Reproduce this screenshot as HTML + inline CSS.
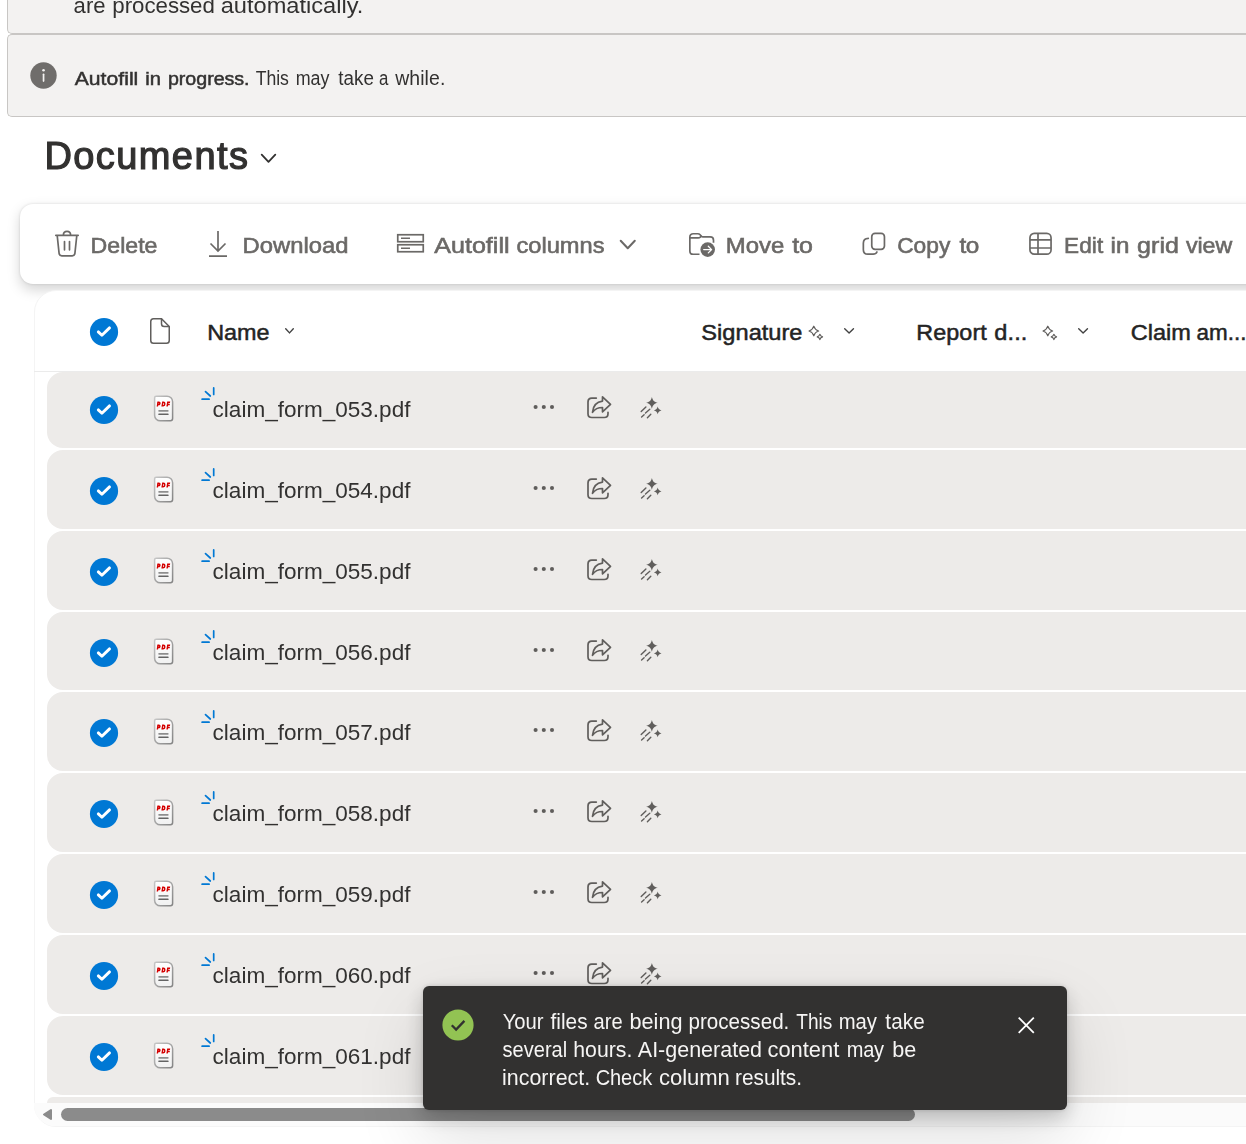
<!DOCTYPE html>
<html lang="en">
<head>
<meta charset="utf-8">
<title>Documents</title>
<style>
*{box-sizing:border-box;margin:0;padding:0}
html,body{width:1246px;height:1144px;overflow:hidden;background:#fff}
body{font-family:"Liberation Sans",sans-serif;color:#323130;position:relative}
.t{position:absolute;white-space:nowrap;line-height:1;transform-origin:0 0}
.g{position:absolute;will-change:transform}
.x{white-space:nowrap;line-height:1}
.t span,.x span{display:inline-block;transform-origin:0 0;white-space:nowrap;line-height:1;vertical-align:top}
.banner{position:absolute;left:7px;background:#f3f2f1;border:1px solid #c8c6c4;border-right:none;border-radius:5px 0 0 5px;width:1250px}
.toolbar{position:absolute;left:20px;top:204px;width:1300px;height:80px;background:#fff;border-radius:13px;box-shadow:0 0 2.8px rgba(0,0,0,.12),0 5.6px 13px rgba(0,0,0,.17)}
.card{position:absolute;left:34px;top:290px;width:1300px;height:837px;border:1px solid #f4f4f4;border-radius:22px 0 0 22px;background:#fff;overflow:hidden}
.row{position:absolute;left:47px;width:1300px;height:78.7px;background:#edebe9;border-radius:16px 0 0 16px}
svg{position:absolute;overflow:visible}
.toast{position:absolute;left:423px;top:986.4px;width:644px;height:123.6px;background:#323130;border-radius:6px;box-shadow:0 7px 20px rgba(0,0,0,.2),0 0 4px rgba(0,0,0,.14),0 30px 70px rgba(0,0,0,.12)}
</style>
</head>
<body>
<svg width="0" height="0" style="left:0;top:0"><defs><linearGradient id="ps" x1="0" y1="0" x2="1" y2="1"><stop offset="0" stop-color="#c6c6c6"/><stop offset="1" stop-color="#848484"/></linearGradient><linearGradient id="pf" x1="0" y1="0" x2="0" y2="1"><stop offset="0" stop-color="#ffffff"/><stop offset="1" stop-color="#f1f1f1"/></linearGradient></defs></svg>
<div class="banner" style="top:-40px;height:74px"></div>
<div class="g" style="left:73px;top:-5px"><div class="x" style="font-size:22.4px;"><span style="transform:translateX(0.53px) scaleX(0.986);letter-spacing:0.096px">are</span> <span style="transform:translateX(0.35px) scaleX(0.995);letter-spacing:-0.036px">processed</span> <span style="transform:translateX(-0.31px) scaleX(1.055)">automatically.</span></div></div>
<div class="banner" style="top:34px;height:83px"></div>
<svg style="left:30px;top:62px" width="27" height="27" viewBox="0 0 27 27"><circle cx="13.500" cy="13.500" r="13.200" fill="#6f6d6b"/><rect x="12.700" y="11.400" width="1.700" height="8.500" rx=".8" fill="#f3f2f1"/><circle cx="13.550" cy="8.200" r="1.300" fill="#f3f2f1"/></svg>
<div class="g" style="left:74px;top:70px"><div class="x" style="font-size:18.8px;-webkit-text-stroke:0.5px currentColor;"><span style="transform:translateX(0.69px) scaleX(1.125);letter-spacing:0.024px">Autofill</span> <span style="transform:translateX(9.34px) scaleX(1.076)">in</span> <span style="transform:translateX(11.98px) scaleX(1.046);letter-spacing:-0.04px">progress.</span> <span style="transform:translate(16.67px,-1px) scaleX(0.899);letter-spacing:-0.051px;font-size:19.6px;-webkit-text-stroke:0px currentColor">This</span> <span style="transform:translate(14.65px,-1px) scaleX(0.912);letter-spacing:-0.038px;font-size:19.6px;-webkit-text-stroke:0px currentColor">may</span> <span style="transform:translate(15.3px,-1px) scaleX(0.96);font-size:19.6px;-webkit-text-stroke:0px currentColor">take</span> <span style="transform:translate(14.0px,-1px) scaleX(0.86);font-size:19.6px;-webkit-text-stroke:0px currentColor">a</span> <span style="transform:translate(14.22px,-1px) scaleX(0.992);letter-spacing:0.073px;font-size:19.6px;-webkit-text-stroke:0px currentColor">while.</span></div></div>
<div class="g" style="left:44px;top:137px"><div class="x" style="font-size:38px;-webkit-text-stroke:1.2px currentColor;"><span style="transform:translateX(0.38px);letter-spacing:1.426px">Documents</span></div></div>
<svg style="left:261px;top:154.1px" width="15" height="8.5" viewBox="0 0 15 8.5"><path d="M0.700 0.700L7.5 7.8L14.3 0.700" fill="none" stroke="#323130" stroke-width="1.8" stroke-linecap="round" stroke-linejoin="round"/></svg>
<div class="toolbar"></div>
<div class="g" style="left:90px;top:235px"><div class="x" style="font-size:22.4px;-webkit-text-stroke:0.6px currentColor;color:#6b6967;"><span style="transform:translateX(0.54px) scaleX(1.034)">Delete</span></div></div>
<div class="g" style="left:242px;top:235px"><div class="x" style="font-size:22.4px;-webkit-text-stroke:0.6px currentColor;color:#6b6967;"><span style="transform:translateX(0.61px) scaleX(1.063)">Download</span></div></div>
<div class="g" style="left:434px;top:235px"><div class="x" style="font-size:22.4px;-webkit-text-stroke:0.6px currentColor;color:#6b6967;"><span style="transform:translateX(0.27px) scaleX(1.12)">Autofill</span> <span style="transform:translateX(9.41px) scaleX(1.057)">columns</span></div></div>
<div class="g" style="left:725px;top:235px"><div class="x" style="font-size:22.4px;-webkit-text-stroke:0.6px currentColor;color:#6b6967;"><span style="transform:translateX(0.85px) scaleX(1.069);letter-spacing:-0.058px">Move</span> <span style="transform:translateX(6.2px) scaleX(1.114);letter-spacing:-0.032px">to</span></div></div>
<div class="g" style="left:897px;top:235px"><div class="x" style="font-size:22.4px;-webkit-text-stroke:0.6px currentColor;color:#6b6967;"><span style="transform:translateX(0.16px) scaleX(1.016);letter-spacing:0.035px">Copy</span> <span style="transform:translateX(3.41px) scaleX(1.086);letter-spacing:-0.31px">to</span></div></div>
<div class="g" style="left:1064px;top:235px"><div class="x" style="font-size:22.4px;-webkit-text-stroke:0.6px currentColor;color:#6b6967;"><span style="transform:translateX(0.09px) scaleX(1.007);letter-spacing:0.071px">Edit</span> <span style="transform:translateX(1.56px) scaleX(1.079);letter-spacing:-0.041px">in</span> <span style="transform:translateX(3.93px) scaleX(1.118);letter-spacing:0.094px">grid</span> <span style="transform:translateX(9.07px) scaleX(1.035);letter-spacing:-0.094px">view</span></div></div>
<svg style="left:55px;top:229.700px" width="24" height="27" viewBox="0 0 24 27"><path d="M.8 5.3h22.4M8.4 5c0-2.3 1.5-3.7 3.6-3.7s3.6 1.4 3.6 3.7M2.2 5.5l1.9 17.8c.2 1.5 1.2 2.5 2.7 2.5h10.400c1.5 0 2.5-1 2.7-2.5L21.8 5.5M9.5 11.6v8.2M14.5 11.6v8.2" fill="none" stroke="#6b6967" stroke-width="1.700" stroke-linecap="round"/></svg>
<svg style="left:209px;top:231px" width="18" height="26" viewBox="0 0 18 26"><path d="M9 0v20M1.500 12.500L9 20l7.500-7.500M0 25.200h18" fill="none" stroke="#6b6967" stroke-width="1.700"/></svg>
<svg style="left:397px;top:234px" width="27" height="19" viewBox="0 0 27 19"><rect x=".75" y=".75" width="25.500" height="7" fill="none" stroke="#6b6967" stroke-width="1.700"/><rect x=".75" y="10.750" width="25.500" height="7" fill="none" stroke="#6b6967" stroke-width="1.700"/><path d="M4 4.250h9M4 14.250h9" stroke="#6b6967" stroke-width="1.700"/></svg>
<svg style="left:620px;top:239.5px" width="15.5" height="9" viewBox="0 0 15.5 9"><path d="M0.700 0.700L7.75 8.3L14.8 0.700" fill="none" stroke="#6b6967" stroke-width="2" stroke-linecap="round" stroke-linejoin="round"/></svg>
<svg style="left:689px;top:232px" width="27" height="26" viewBox="0 0 27 26"><path d="M10.500 22.250H4.200C2.200 22.250.85 20.900.85 18.900V5.100C.85 3.100 2.200 1.750 4.200 1.750h4.600c1 0 1.700.3 2.300 1l1.300 1.500c.4.500.9.700 1.500.7h7.300c2 0 3.300 1.300 3.300 3.300v2.400" fill="none" stroke="#6b6967" stroke-width="1.700"/><path d="M.85 5.950h8.300c.9 0 1.600-.3 2.200-.9l1.300-1.300" fill="none" stroke="#6b6967" stroke-width="1.700"/><circle cx="18.700" cy="17.600" r="7.300" fill="#6b6967"/><path d="M14.700 17.600h7.600M19.300 14.300l3.300 3.300-3.300 3.300" fill="none" stroke="#fff" stroke-width="1.300" stroke-linecap="round" stroke-linejoin="round"/></svg>
<svg style="left:862px;top:232px" width="24" height="24" viewBox="0 0 24 24"><rect x="9.750" y="1.450" width="12.700" height="15.950" rx="3.300" fill="none" stroke="#6b6967" stroke-width="1.700"/><path d="M6.300 6.300C3.400 6.400 1.350 8.300 1.350 11.200v6.500c0 2.700 1.800 4.500 4.500 4.500h5.200c1.900 0 3.300-.8 3.900-2.200" fill="none" stroke="#6b6967" stroke-width="1.700" stroke-linecap="round"/></svg>
<svg style="left:1029px;top:232px" width="23" height="24" viewBox="0 0 23 24"><rect x=".95" y="1.450" width="21.100" height="20.750" rx="4.300" fill="none" stroke="#6b6967" stroke-width="1.700"/><path d="M.95 7.850h21.100M.95 16h21.100M9 1.450v20.750" stroke="#6b6967" stroke-width="1.700" fill="none"/></svg>
<div class="card"></div>
<div style="position:absolute;left:34px;top:370.500px;width:1300px;height:1px;background:#ebebeb"></div>
<svg style="left:90px;top:317.8px" width="28" height="28" viewBox="0 0 28 28"><circle cx="14" cy="14" r="14.100" fill="#0078d4"/><path d="M8.300 13.900L11.900 17.300L19.500 9.900" fill="none" stroke="#fff" stroke-width="2.900" stroke-linecap="round" stroke-linejoin="round"/></svg>
<svg style="left:150px;top:318px" width="20" height="26" viewBox="0 0 20 26"><path d="M3.500.75h8l7.750 7.750V22.500c0 1.500-1.200 2.750-2.750 2.750H3.500C2 25.250.75 24 .75 22.500V3.500C.75 2 2 .75 3.500.75z" fill="none" stroke="#605e5c" stroke-width="1.500"/><path d="M11.500.75v5c0 1.500 1.200 2.750 2.750 2.750h5" fill="none" stroke="#605e5c" stroke-width="1.500"/></svg>
<div class="t" style="left:207px;top:322px;font-size:22.4px;-webkit-text-stroke:0.5px currentColor;color:#242424;"><span style="transform:translateX(0.26px) scaleX(1.044);letter-spacing:-0.024px">Name</span></div>
<svg style="left:285px;top:328.2px" width="9" height="5.6" viewBox="0 0 9 5.6"><path d="M0.700 0.700L4.5 4.8999999999999995L8.3 0.700" fill="none" stroke="#424242" stroke-width="1.4" stroke-linecap="round" stroke-linejoin="round"/></svg>
<div class="t" style="left:701px;top:322px;font-size:22.4px;-webkit-text-stroke:0.5px currentColor;color:#242424;"><span style="transform:translateX(0.36px) scaleX(1.055)">Signature</span></div>
<svg style="left:808px;top:325px" width="16" height="16" viewBox="0 0 16 16"><path d="M5.8 1.2000000000000002c0.86 2.88 1.92 3.94 4.8 4.8c-2.88 0.86 -3.94 1.92 -4.8 4.8c-0.86 -2.88 -1.92 -3.94 -4.8 -4.8c2.88 -0.86 3.94 -1.92 4.8 -4.8z" fill="none" stroke="#605e5c" stroke-width="1.200" stroke-linejoin="round"/><path d="M11.9 9.2c0.49 1.62 1.08 2.21 2.7 2.7c-1.62 0.49 -2.21 1.08 -2.7 2.7c-0.49 -1.62 -1.08 -2.21 -2.7 -2.7c1.62 -0.49 2.21 -1.08 2.7 -2.7z" fill="none" stroke="#605e5c" stroke-width="1.100" stroke-linejoin="round"/></svg>
<svg style="left:843.5px;top:328.1px" width="10.2" height="5.7" viewBox="0 0 10.2 5.7"><path d="M0.700 0.700L5.1 5.0L9.5 0.700" fill="none" stroke="#424242" stroke-width="1.4" stroke-linecap="round" stroke-linejoin="round"/></svg>
<div class="t" style="left:916px;top:322px;font-size:22.4px;-webkit-text-stroke:0.5px currentColor;color:#242424;"><span style="transform:translateX(0.25px) scaleX(1.042);letter-spacing:0.091px">Report</span> <span style="transform:translateX(4.17px) scaleX(1.052);letter-spacing:0.163px">d...</span></div>
<svg style="left:1042.2px;top:325px" width="16" height="16" viewBox="0 0 16 16"><path d="M5.8 1.2000000000000002c0.86 2.88 1.92 3.94 4.8 4.8c-2.88 0.86 -3.94 1.92 -4.8 4.8c-0.86 -2.88 -1.92 -3.94 -4.8 -4.8c2.88 -0.86 3.94 -1.92 4.8 -4.8z" fill="none" stroke="#605e5c" stroke-width="1.200" stroke-linejoin="round"/><path d="M11.9 9.2c0.49 1.62 1.08 2.21 2.7 2.7c-1.62 0.49 -2.21 1.08 -2.7 2.7c-0.49 -1.62 -1.08 -2.21 -2.7 -2.7c1.62 -0.49 2.21 -1.08 2.7 -2.7z" fill="none" stroke="#605e5c" stroke-width="1.100" stroke-linejoin="round"/></svg>
<svg style="left:1077.9px;top:328.3px" width="10.2" height="5.7" viewBox="0 0 10.2 5.7"><path d="M0.700 0.700L5.1 5.0L9.5 0.700" fill="none" stroke="#424242" stroke-width="1.4" stroke-linecap="round" stroke-linejoin="round"/></svg>
<div class="t" style="left:1130px;top:322px;font-size:22.4px;-webkit-text-stroke:0.5px currentColor;color:#242424;"><span style="transform:translateX(0.87px) scaleX(1.051);letter-spacing:-0.034px">Claim</span> <span style="transform:translateX(3.54px) scaleX(1.001)">am...</span></div>
<div class="row" style="top:371.700px;height:76.50px"></div>
<svg style="left:90px;top:395.7px" width="28" height="28" viewBox="0 0 28 28"><circle cx="14" cy="14" r="14.100" fill="#0078d4"/><path d="M8.300 13.900L11.900 17.300L19.500 9.900" fill="none" stroke="#fff" stroke-width="2.900" stroke-linecap="round" stroke-linejoin="round"/></svg>
<svg style="left:153px;top:395.0px;will-change:transform" width="21" height="27" viewBox="0 0 21 27"><path d="M3.200 1.200h10.800c3.100 0 5.600 2.500 5.600 5.600v16.800c0 1.200-1 2.200-2.200 2.200H7.200c-3.100 0-5.600-2.500-5.600-5.600V2.800c0-.9.700-1.600 1.600-1.600z" fill="url(#pf)" stroke="url(#ps)" stroke-width="1.500"/><text transform="translate(4.1 11.45) scale(.8 1)" font-family="Liberation Sans, sans-serif" font-size="6" font-weight="bold" font-style="italic" fill="#d40000" stroke="#d40000" stroke-width=".9" letter-spacing="1.8">PDF</text><rect x="5.300" y="15.100" width="10.300" height="1.600" rx=".6" fill="#8e8e8e"/><rect x="5.300" y="18.400" width="10.300" height="1.600" rx=".6" fill="#646464"/></svg>
<svg style="left:201px;top:386.5px" width="14" height="14" viewBox="0 0 14 14"><path d="M12.7 .9v6.6M4.500 4.600l4.800 4.400M1.100 12.200h7" fill="none" stroke="#0078d4" stroke-width="1.700" stroke-linecap="round"/></svg>
<div class="g" style="left:212px;top:399px"><div class="x" style="font-size:22px;"><span style="transform:translateX(0.58px) scaleX(1.024)">claim_form_053.pdf</span></div></div>
<svg style="left:530px;top:401.9px" width="28" height="10" viewBox="0 0 28 10"><circle cx="5.600" cy="5" r="2.050" fill="#5f5d5b"/><circle cx="13.800" cy="5" r="2.050" fill="#5f5d5b"/><circle cx="22" cy="5" r="2.050" fill="#5f5d5b"/></svg>
<svg style="left:587px;top:395.5px" width="25" height="23" viewBox="0 0 25 23"><path d="M9.300 2.100H4.800C2.600 2.100 1 3.700 1 5.900v11.800c0 2.200 1.600 3.800 3.800 3.800h12.400c2.200 0 3.800-1.600 3.800-3.800v-1.400" fill="none" stroke="#605e5c" stroke-width="1.700" stroke-linecap="round"/><path d="M15.500 .8l8 7.500-8 7.500v-4.300c-4.500 0-7.500 1.300-10 4.800.5-6 3.800-10.400 10-11.200z" fill="none" stroke="#605e5c" stroke-width="1.700" stroke-linejoin="round"/></svg>
<svg style="left:640px;top:396.5px" width="22" height="22" viewBox="0 0 22 22"><path d="M11.9 -0.10000000000000053c0.94 3.66 2.24 4.96 5.9 5.9c-3.66 0.94 -4.96 2.24 -5.9 5.9c-0.94 -3.66 -2.24 -4.96 -5.9 -5.9c3.66 -0.94 4.96 -2.24 5.9 -5.9z" fill="#605e5c"/><path d="M17.7 9.600000000000001c0.61 2.36 1.44 3.19 3.8 3.8c-2.36 0.61 -3.19 1.44 -3.8 3.8c-0.61 -2.36 -1.44 -3.19 -3.8 -3.8c2.36 -0.61 3.19 -1.44 3.8 -3.8z" fill="#605e5c"/><path d="M1.200 14.600L5.900 9.900M1.600 20L4.100 17.700M5.500 16L9.800 12.300M7.400 20.800L10.800 17.200" fill="none" stroke="#605e5c" stroke-width="1.400" stroke-linecap="round"/></svg>
<div class="row" style="top:450.10px;height:79.10px"></div>
<svg style="left:90px;top:476.7px" width="28" height="28" viewBox="0 0 28 28"><circle cx="14" cy="14" r="14.100" fill="#0078d4"/><path d="M8.300 13.900L11.900 17.300L19.500 9.900" fill="none" stroke="#fff" stroke-width="2.900" stroke-linecap="round" stroke-linejoin="round"/></svg>
<svg style="left:153px;top:476.0px;will-change:transform" width="21" height="27" viewBox="0 0 21 27"><path d="M3.200 1.200h10.800c3.100 0 5.600 2.500 5.600 5.600v16.800c0 1.200-1 2.200-2.200 2.200H7.200c-3.100 0-5.600-2.500-5.600-5.600V2.800c0-.9.700-1.600 1.600-1.600z" fill="url(#pf)" stroke="url(#ps)" stroke-width="1.500"/><text transform="translate(4.1 11.45) scale(.8 1)" font-family="Liberation Sans, sans-serif" font-size="6" font-weight="bold" font-style="italic" fill="#d40000" stroke="#d40000" stroke-width=".9" letter-spacing="1.8">PDF</text><rect x="5.300" y="15.100" width="10.300" height="1.600" rx=".6" fill="#8e8e8e"/><rect x="5.300" y="18.400" width="10.300" height="1.600" rx=".6" fill="#646464"/></svg>
<svg style="left:201px;top:467.5px" width="14" height="14" viewBox="0 0 14 14"><path d="M12.7 .9v6.6M4.500 4.600l4.800 4.400M1.100 12.200h7" fill="none" stroke="#0078d4" stroke-width="1.700" stroke-linecap="round"/></svg>
<div class="g" style="left:212px;top:480px"><div class="x" style="font-size:22px;"><span style="transform:translateX(0.58px) scaleX(1.024)">claim_form_054.pdf</span></div></div>
<svg style="left:530px;top:482.9px" width="28" height="10" viewBox="0 0 28 10"><circle cx="5.600" cy="5" r="2.050" fill="#5f5d5b"/><circle cx="13.800" cy="5" r="2.050" fill="#5f5d5b"/><circle cx="22" cy="5" r="2.050" fill="#5f5d5b"/></svg>
<svg style="left:587px;top:476.5px" width="25" height="23" viewBox="0 0 25 23"><path d="M9.300 2.100H4.800C2.600 2.100 1 3.700 1 5.900v11.800c0 2.200 1.600 3.800 3.800 3.800h12.400c2.200 0 3.800-1.600 3.800-3.800v-1.400" fill="none" stroke="#605e5c" stroke-width="1.700" stroke-linecap="round"/><path d="M15.500 .8l8 7.500-8 7.500v-4.300c-4.500 0-7.500 1.300-10 4.800.5-6 3.800-10.400 10-11.200z" fill="none" stroke="#605e5c" stroke-width="1.700" stroke-linejoin="round"/></svg>
<svg style="left:640px;top:477.5px" width="22" height="22" viewBox="0 0 22 22"><path d="M11.9 -0.10000000000000053c0.94 3.66 2.24 4.96 5.9 5.9c-3.66 0.94 -4.96 2.24 -5.9 5.9c-0.94 -3.66 -2.24 -4.96 -5.9 -5.9c3.66 -0.94 4.96 -2.24 5.9 -5.9z" fill="#605e5c"/><path d="M17.7 9.600000000000001c0.61 2.36 1.44 3.19 3.8 3.8c-2.36 0.61 -3.19 1.44 -3.8 3.8c-0.61 -2.36 -1.44 -3.19 -3.8 -3.8c2.36 -0.61 3.19 -1.44 3.8 -3.8z" fill="#605e5c"/><path d="M1.200 14.600L5.900 9.900M1.600 20L4.100 17.700M5.500 16L9.800 12.300M7.400 20.800L10.800 17.200" fill="none" stroke="#605e5c" stroke-width="1.400" stroke-linecap="round"/></svg>
<div class="row" style="top:531.10px;height:79.10px"></div>
<svg style="left:90px;top:557.7px" width="28" height="28" viewBox="0 0 28 28"><circle cx="14" cy="14" r="14.100" fill="#0078d4"/><path d="M8.300 13.900L11.900 17.300L19.500 9.900" fill="none" stroke="#fff" stroke-width="2.900" stroke-linecap="round" stroke-linejoin="round"/></svg>
<svg style="left:153px;top:557.0px;will-change:transform" width="21" height="27" viewBox="0 0 21 27"><path d="M3.200 1.200h10.800c3.100 0 5.600 2.500 5.600 5.600v16.800c0 1.200-1 2.200-2.200 2.200H7.200c-3.100 0-5.600-2.500-5.600-5.600V2.800c0-.9.700-1.600 1.600-1.600z" fill="url(#pf)" stroke="url(#ps)" stroke-width="1.500"/><text transform="translate(4.1 11.45) scale(.8 1)" font-family="Liberation Sans, sans-serif" font-size="6" font-weight="bold" font-style="italic" fill="#d40000" stroke="#d40000" stroke-width=".9" letter-spacing="1.8">PDF</text><rect x="5.300" y="15.100" width="10.300" height="1.600" rx=".6" fill="#8e8e8e"/><rect x="5.300" y="18.400" width="10.300" height="1.600" rx=".6" fill="#646464"/></svg>
<svg style="left:201px;top:548.5px" width="14" height="14" viewBox="0 0 14 14"><path d="M12.7 .9v6.6M4.500 4.600l4.800 4.400M1.100 12.200h7" fill="none" stroke="#0078d4" stroke-width="1.700" stroke-linecap="round"/></svg>
<div class="g" style="left:212px;top:561px"><div class="x" style="font-size:22px;"><span style="transform:translateX(0.58px) scaleX(1.024)">claim_form_055.pdf</span></div></div>
<svg style="left:530px;top:563.9px" width="28" height="10" viewBox="0 0 28 10"><circle cx="5.600" cy="5" r="2.050" fill="#5f5d5b"/><circle cx="13.800" cy="5" r="2.050" fill="#5f5d5b"/><circle cx="22" cy="5" r="2.050" fill="#5f5d5b"/></svg>
<svg style="left:587px;top:557.5px" width="25" height="23" viewBox="0 0 25 23"><path d="M9.300 2.100H4.800C2.600 2.100 1 3.700 1 5.900v11.800c0 2.200 1.600 3.800 3.800 3.800h12.400c2.200 0 3.800-1.600 3.800-3.800v-1.400" fill="none" stroke="#605e5c" stroke-width="1.700" stroke-linecap="round"/><path d="M15.500 .8l8 7.500-8 7.500v-4.300c-4.500 0-7.500 1.300-10 4.800.5-6 3.800-10.400 10-11.200z" fill="none" stroke="#605e5c" stroke-width="1.700" stroke-linejoin="round"/></svg>
<svg style="left:640px;top:558.5px" width="22" height="22" viewBox="0 0 22 22"><path d="M11.9 -0.10000000000000053c0.94 3.66 2.24 4.96 5.9 5.9c-3.66 0.94 -4.96 2.24 -5.9 5.9c-0.94 -3.66 -2.24 -4.96 -5.9 -5.9c3.66 -0.94 4.96 -2.24 5.9 -5.9z" fill="#605e5c"/><path d="M17.7 9.600000000000001c0.61 2.36 1.44 3.19 3.8 3.8c-2.36 0.61 -3.19 1.44 -3.8 3.8c-0.61 -2.36 -1.44 -3.19 -3.8 -3.8c2.36 -0.61 3.19 -1.44 3.8 -3.8z" fill="#605e5c"/><path d="M1.200 14.600L5.900 9.900M1.600 20L4.100 17.700M5.500 16L9.800 12.300M7.400 20.800L10.800 17.200" fill="none" stroke="#605e5c" stroke-width="1.400" stroke-linecap="round"/></svg>
<div class="row" style="top:612.10px;height:78.10px"></div>
<svg style="left:90px;top:638.7px" width="28" height="28" viewBox="0 0 28 28"><circle cx="14" cy="14" r="14.100" fill="#0078d4"/><path d="M8.300 13.900L11.900 17.300L19.500 9.900" fill="none" stroke="#fff" stroke-width="2.900" stroke-linecap="round" stroke-linejoin="round"/></svg>
<svg style="left:153px;top:638.0px;will-change:transform" width="21" height="27" viewBox="0 0 21 27"><path d="M3.200 1.200h10.800c3.100 0 5.600 2.500 5.600 5.600v16.800c0 1.200-1 2.200-2.200 2.200H7.200c-3.100 0-5.600-2.500-5.600-5.600V2.800c0-.9.700-1.600 1.600-1.600z" fill="url(#pf)" stroke="url(#ps)" stroke-width="1.500"/><text transform="translate(4.1 11.45) scale(.8 1)" font-family="Liberation Sans, sans-serif" font-size="6" font-weight="bold" font-style="italic" fill="#d40000" stroke="#d40000" stroke-width=".9" letter-spacing="1.8">PDF</text><rect x="5.300" y="15.100" width="10.300" height="1.600" rx=".6" fill="#8e8e8e"/><rect x="5.300" y="18.400" width="10.300" height="1.600" rx=".6" fill="#646464"/></svg>
<svg style="left:201px;top:629.5px" width="14" height="14" viewBox="0 0 14 14"><path d="M12.7 .9v6.6M4.500 4.600l4.800 4.400M1.100 12.200h7" fill="none" stroke="#0078d4" stroke-width="1.700" stroke-linecap="round"/></svg>
<div class="g" style="left:212px;top:642px"><div class="x" style="font-size:22px;"><span style="transform:translateX(0.58px) scaleX(1.024)">claim_form_056.pdf</span></div></div>
<svg style="left:530px;top:644.9px" width="28" height="10" viewBox="0 0 28 10"><circle cx="5.600" cy="5" r="2.050" fill="#5f5d5b"/><circle cx="13.800" cy="5" r="2.050" fill="#5f5d5b"/><circle cx="22" cy="5" r="2.050" fill="#5f5d5b"/></svg>
<svg style="left:587px;top:638.5px" width="25" height="23" viewBox="0 0 25 23"><path d="M9.300 2.100H4.800C2.600 2.100 1 3.700 1 5.900v11.800c0 2.200 1.600 3.800 3.800 3.800h12.400c2.200 0 3.800-1.600 3.800-3.800v-1.400" fill="none" stroke="#605e5c" stroke-width="1.700" stroke-linecap="round"/><path d="M15.500 .8l8 7.500-8 7.500v-4.300c-4.500 0-7.500 1.300-10 4.800.5-6 3.800-10.400 10-11.200z" fill="none" stroke="#605e5c" stroke-width="1.700" stroke-linejoin="round"/></svg>
<svg style="left:640px;top:639.5px" width="22" height="22" viewBox="0 0 22 22"><path d="M11.9 -0.10000000000000053c0.94 3.66 2.24 4.96 5.9 5.9c-3.66 0.94 -4.96 2.24 -5.9 5.9c-0.94 -3.66 -2.24 -4.96 -5.9 -5.9c3.66 -0.94 4.96 -2.24 5.9 -5.9z" fill="#605e5c"/><path d="M17.7 9.600000000000001c0.61 2.36 1.44 3.19 3.8 3.8c-2.36 0.61 -3.19 1.44 -3.8 3.8c-0.61 -2.36 -1.44 -3.19 -3.8 -3.8c2.36 -0.61 3.19 -1.44 3.8 -3.8z" fill="#605e5c"/><path d="M1.200 14.600L5.900 9.900M1.600 20L4.100 17.700M5.500 16L9.800 12.300M7.400 20.800L10.800 17.200" fill="none" stroke="#605e5c" stroke-width="1.400" stroke-linecap="round"/></svg>
<div class="row" style="top:692.10px;height:79.10px"></div>
<svg style="left:90px;top:718.7px" width="28" height="28" viewBox="0 0 28 28"><circle cx="14" cy="14" r="14.100" fill="#0078d4"/><path d="M8.300 13.900L11.900 17.300L19.500 9.900" fill="none" stroke="#fff" stroke-width="2.900" stroke-linecap="round" stroke-linejoin="round"/></svg>
<svg style="left:153px;top:718.0px;will-change:transform" width="21" height="27" viewBox="0 0 21 27"><path d="M3.200 1.200h10.800c3.100 0 5.600 2.500 5.600 5.600v16.800c0 1.200-1 2.200-2.200 2.200H7.200c-3.100 0-5.600-2.500-5.600-5.600V2.800c0-.9.700-1.600 1.600-1.600z" fill="url(#pf)" stroke="url(#ps)" stroke-width="1.500"/><text transform="translate(4.1 11.45) scale(.8 1)" font-family="Liberation Sans, sans-serif" font-size="6" font-weight="bold" font-style="italic" fill="#d40000" stroke="#d40000" stroke-width=".9" letter-spacing="1.8">PDF</text><rect x="5.300" y="15.100" width="10.300" height="1.600" rx=".6" fill="#8e8e8e"/><rect x="5.300" y="18.400" width="10.300" height="1.600" rx=".6" fill="#646464"/></svg>
<svg style="left:201px;top:709.5px" width="14" height="14" viewBox="0 0 14 14"><path d="M12.7 .9v6.6M4.500 4.600l4.800 4.400M1.100 12.200h7" fill="none" stroke="#0078d4" stroke-width="1.700" stroke-linecap="round"/></svg>
<div class="g" style="left:212px;top:722px"><div class="x" style="font-size:22px;"><span style="transform:translateX(0.58px) scaleX(1.024)">claim_form_057.pdf</span></div></div>
<svg style="left:530px;top:724.9px" width="28" height="10" viewBox="0 0 28 10"><circle cx="5.600" cy="5" r="2.050" fill="#5f5d5b"/><circle cx="13.800" cy="5" r="2.050" fill="#5f5d5b"/><circle cx="22" cy="5" r="2.050" fill="#5f5d5b"/></svg>
<svg style="left:587px;top:718.5px" width="25" height="23" viewBox="0 0 25 23"><path d="M9.300 2.100H4.800C2.600 2.100 1 3.700 1 5.900v11.800c0 2.200 1.600 3.800 3.800 3.800h12.400c2.200 0 3.800-1.600 3.800-3.800v-1.400" fill="none" stroke="#605e5c" stroke-width="1.700" stroke-linecap="round"/><path d="M15.500 .8l8 7.500-8 7.500v-4.300c-4.500 0-7.500 1.300-10 4.800.5-6 3.800-10.400 10-11.200z" fill="none" stroke="#605e5c" stroke-width="1.700" stroke-linejoin="round"/></svg>
<svg style="left:640px;top:719.5px" width="22" height="22" viewBox="0 0 22 22"><path d="M11.9 -0.10000000000000053c0.94 3.66 2.24 4.96 5.9 5.9c-3.66 0.94 -4.96 2.24 -5.9 5.9c-0.94 -3.66 -2.24 -4.96 -5.9 -5.9c3.66 -0.94 4.96 -2.24 5.9 -5.9z" fill="#605e5c"/><path d="M17.7 9.600000000000001c0.61 2.36 1.44 3.19 3.8 3.8c-2.36 0.61 -3.19 1.44 -3.8 3.8c-0.61 -2.36 -1.44 -3.19 -3.8 -3.8c2.36 -0.61 3.19 -1.44 3.8 -3.8z" fill="#605e5c"/><path d="M1.200 14.600L5.900 9.900M1.600 20L4.100 17.700M5.500 16L9.800 12.300M7.400 20.800L10.800 17.200" fill="none" stroke="#605e5c" stroke-width="1.400" stroke-linecap="round"/></svg>
<div class="row" style="top:773.10px;height:79.10px"></div>
<svg style="left:90px;top:799.7px" width="28" height="28" viewBox="0 0 28 28"><circle cx="14" cy="14" r="14.100" fill="#0078d4"/><path d="M8.300 13.900L11.900 17.300L19.500 9.900" fill="none" stroke="#fff" stroke-width="2.900" stroke-linecap="round" stroke-linejoin="round"/></svg>
<svg style="left:153px;top:799.0px;will-change:transform" width="21" height="27" viewBox="0 0 21 27"><path d="M3.200 1.200h10.800c3.100 0 5.600 2.500 5.600 5.600v16.800c0 1.200-1 2.200-2.200 2.200H7.200c-3.100 0-5.600-2.500-5.600-5.600V2.800c0-.9.700-1.600 1.600-1.600z" fill="url(#pf)" stroke="url(#ps)" stroke-width="1.500"/><text transform="translate(4.1 11.45) scale(.8 1)" font-family="Liberation Sans, sans-serif" font-size="6" font-weight="bold" font-style="italic" fill="#d40000" stroke="#d40000" stroke-width=".9" letter-spacing="1.8">PDF</text><rect x="5.300" y="15.100" width="10.300" height="1.600" rx=".6" fill="#8e8e8e"/><rect x="5.300" y="18.400" width="10.300" height="1.600" rx=".6" fill="#646464"/></svg>
<svg style="left:201px;top:790.5px" width="14" height="14" viewBox="0 0 14 14"><path d="M12.7 .9v6.6M4.500 4.600l4.800 4.400M1.100 12.200h7" fill="none" stroke="#0078d4" stroke-width="1.700" stroke-linecap="round"/></svg>
<div class="g" style="left:212px;top:803px"><div class="x" style="font-size:22px;"><span style="transform:translateX(0.58px) scaleX(1.024)">claim_form_058.pdf</span></div></div>
<svg style="left:530px;top:805.9px" width="28" height="10" viewBox="0 0 28 10"><circle cx="5.600" cy="5" r="2.050" fill="#5f5d5b"/><circle cx="13.800" cy="5" r="2.050" fill="#5f5d5b"/><circle cx="22" cy="5" r="2.050" fill="#5f5d5b"/></svg>
<svg style="left:587px;top:799.5px" width="25" height="23" viewBox="0 0 25 23"><path d="M9.300 2.100H4.800C2.600 2.100 1 3.700 1 5.900v11.800c0 2.200 1.600 3.800 3.800 3.800h12.400c2.200 0 3.800-1.600 3.800-3.800v-1.400" fill="none" stroke="#605e5c" stroke-width="1.700" stroke-linecap="round"/><path d="M15.500 .8l8 7.500-8 7.500v-4.300c-4.500 0-7.500 1.300-10 4.800.5-6 3.800-10.400 10-11.200z" fill="none" stroke="#605e5c" stroke-width="1.700" stroke-linejoin="round"/></svg>
<svg style="left:640px;top:800.5px" width="22" height="22" viewBox="0 0 22 22"><path d="M11.9 -0.10000000000000053c0.94 3.66 2.24 4.96 5.9 5.9c-3.66 0.94 -4.96 2.24 -5.9 5.9c-0.94 -3.66 -2.24 -4.96 -5.9 -5.9c3.66 -0.94 4.96 -2.24 5.9 -5.9z" fill="#605e5c"/><path d="M17.7 9.600000000000001c0.61 2.36 1.44 3.19 3.8 3.8c-2.36 0.61 -3.19 1.44 -3.8 3.8c-0.61 -2.36 -1.44 -3.19 -3.8 -3.8c2.36 -0.61 3.19 -1.44 3.8 -3.8z" fill="#605e5c"/><path d="M1.200 14.600L5.900 9.900M1.600 20L4.100 17.700M5.500 16L9.800 12.300M7.400 20.800L10.800 17.200" fill="none" stroke="#605e5c" stroke-width="1.400" stroke-linecap="round"/></svg>
<div class="row" style="top:854.10px;height:79.10px"></div>
<svg style="left:90px;top:880.7px" width="28" height="28" viewBox="0 0 28 28"><circle cx="14" cy="14" r="14.100" fill="#0078d4"/><path d="M8.300 13.900L11.900 17.300L19.500 9.900" fill="none" stroke="#fff" stroke-width="2.900" stroke-linecap="round" stroke-linejoin="round"/></svg>
<svg style="left:153px;top:880.0px;will-change:transform" width="21" height="27" viewBox="0 0 21 27"><path d="M3.200 1.200h10.800c3.100 0 5.600 2.500 5.600 5.600v16.800c0 1.200-1 2.200-2.200 2.200H7.200c-3.100 0-5.600-2.500-5.600-5.600V2.800c0-.9.700-1.600 1.600-1.600z" fill="url(#pf)" stroke="url(#ps)" stroke-width="1.500"/><text transform="translate(4.1 11.45) scale(.8 1)" font-family="Liberation Sans, sans-serif" font-size="6" font-weight="bold" font-style="italic" fill="#d40000" stroke="#d40000" stroke-width=".9" letter-spacing="1.8">PDF</text><rect x="5.300" y="15.100" width="10.300" height="1.600" rx=".6" fill="#8e8e8e"/><rect x="5.300" y="18.400" width="10.300" height="1.600" rx=".6" fill="#646464"/></svg>
<svg style="left:201px;top:871.5px" width="14" height="14" viewBox="0 0 14 14"><path d="M12.7 .9v6.6M4.500 4.600l4.800 4.400M1.100 12.200h7" fill="none" stroke="#0078d4" stroke-width="1.700" stroke-linecap="round"/></svg>
<div class="g" style="left:212px;top:884px"><div class="x" style="font-size:22px;"><span style="transform:translateX(0.58px) scaleX(1.024)">claim_form_059.pdf</span></div></div>
<svg style="left:530px;top:886.9px" width="28" height="10" viewBox="0 0 28 10"><circle cx="5.600" cy="5" r="2.050" fill="#5f5d5b"/><circle cx="13.800" cy="5" r="2.050" fill="#5f5d5b"/><circle cx="22" cy="5" r="2.050" fill="#5f5d5b"/></svg>
<svg style="left:587px;top:880.5px" width="25" height="23" viewBox="0 0 25 23"><path d="M9.300 2.100H4.800C2.600 2.100 1 3.700 1 5.900v11.800c0 2.200 1.600 3.800 3.800 3.800h12.400c2.200 0 3.800-1.600 3.800-3.800v-1.400" fill="none" stroke="#605e5c" stroke-width="1.700" stroke-linecap="round"/><path d="M15.500 .8l8 7.500-8 7.500v-4.300c-4.500 0-7.500 1.300-10 4.800.5-6 3.800-10.400 10-11.200z" fill="none" stroke="#605e5c" stroke-width="1.700" stroke-linejoin="round"/></svg>
<svg style="left:640px;top:881.5px" width="22" height="22" viewBox="0 0 22 22"><path d="M11.9 -0.10000000000000053c0.94 3.66 2.24 4.96 5.9 5.9c-3.66 0.94 -4.96 2.24 -5.9 5.9c-0.94 -3.66 -2.24 -4.96 -5.9 -5.9c3.66 -0.94 4.96 -2.24 5.9 -5.9z" fill="#605e5c"/><path d="M17.7 9.600000000000001c0.61 2.36 1.44 3.19 3.8 3.8c-2.36 0.61 -3.19 1.44 -3.8 3.8c-0.61 -2.36 -1.44 -3.19 -3.8 -3.8c2.36 -0.61 3.19 -1.44 3.8 -3.8z" fill="#605e5c"/><path d="M1.200 14.600L5.900 9.900M1.600 20L4.100 17.700M5.500 16L9.800 12.300M7.400 20.800L10.800 17.200" fill="none" stroke="#605e5c" stroke-width="1.400" stroke-linecap="round"/></svg>
<div class="row" style="top:935.10px;height:79.10px"></div>
<svg style="left:90px;top:961.7px" width="28" height="28" viewBox="0 0 28 28"><circle cx="14" cy="14" r="14.100" fill="#0078d4"/><path d="M8.300 13.900L11.900 17.300L19.500 9.900" fill="none" stroke="#fff" stroke-width="2.900" stroke-linecap="round" stroke-linejoin="round"/></svg>
<svg style="left:153px;top:961.0px;will-change:transform" width="21" height="27" viewBox="0 0 21 27"><path d="M3.200 1.200h10.800c3.100 0 5.600 2.500 5.600 5.600v16.800c0 1.200-1 2.200-2.200 2.200H7.200c-3.100 0-5.600-2.500-5.600-5.600V2.800c0-.9.700-1.600 1.600-1.600z" fill="url(#pf)" stroke="url(#ps)" stroke-width="1.500"/><text transform="translate(4.1 11.45) scale(.8 1)" font-family="Liberation Sans, sans-serif" font-size="6" font-weight="bold" font-style="italic" fill="#d40000" stroke="#d40000" stroke-width=".9" letter-spacing="1.8">PDF</text><rect x="5.300" y="15.100" width="10.300" height="1.600" rx=".6" fill="#8e8e8e"/><rect x="5.300" y="18.400" width="10.300" height="1.600" rx=".6" fill="#646464"/></svg>
<svg style="left:201px;top:952.5px" width="14" height="14" viewBox="0 0 14 14"><path d="M12.7 .9v6.6M4.500 4.600l4.800 4.400M1.100 12.200h7" fill="none" stroke="#0078d4" stroke-width="1.700" stroke-linecap="round"/></svg>
<div class="g" style="left:212px;top:965px"><div class="x" style="font-size:22px;"><span style="transform:translateX(0.58px) scaleX(1.024)">claim_form_060.pdf</span></div></div>
<svg style="left:530px;top:967.9px" width="28" height="10" viewBox="0 0 28 10"><circle cx="5.600" cy="5" r="2.050" fill="#5f5d5b"/><circle cx="13.800" cy="5" r="2.050" fill="#5f5d5b"/><circle cx="22" cy="5" r="2.050" fill="#5f5d5b"/></svg>
<svg style="left:587px;top:961.5px" width="25" height="23" viewBox="0 0 25 23"><path d="M9.300 2.100H4.800C2.600 2.100 1 3.700 1 5.900v11.800c0 2.200 1.600 3.800 3.800 3.800h12.400c2.200 0 3.800-1.600 3.800-3.800v-1.400" fill="none" stroke="#605e5c" stroke-width="1.700" stroke-linecap="round"/><path d="M15.500 .8l8 7.500-8 7.500v-4.300c-4.500 0-7.500 1.300-10 4.800.5-6 3.800-10.400 10-11.200z" fill="none" stroke="#605e5c" stroke-width="1.700" stroke-linejoin="round"/></svg>
<svg style="left:640px;top:962.5px" width="22" height="22" viewBox="0 0 22 22"><path d="M11.9 -0.10000000000000053c0.94 3.66 2.24 4.96 5.9 5.9c-3.66 0.94 -4.96 2.24 -5.9 5.9c-0.94 -3.66 -2.24 -4.96 -5.9 -5.9c3.66 -0.94 4.96 -2.24 5.9 -5.9z" fill="#605e5c"/><path d="M17.7 9.600000000000001c0.61 2.36 1.44 3.19 3.8 3.8c-2.36 0.61 -3.19 1.44 -3.8 3.8c-0.61 -2.36 -1.44 -3.19 -3.8 -3.8c2.36 -0.61 3.19 -1.44 3.8 -3.8z" fill="#605e5c"/><path d="M1.200 14.600L5.900 9.900M1.600 20L4.100 17.700M5.500 16L9.800 12.300M7.400 20.800L10.800 17.200" fill="none" stroke="#605e5c" stroke-width="1.400" stroke-linecap="round"/></svg>
<div class="row" style="top:1016.10px;height:79.10px"></div>
<svg style="left:90px;top:1042.7px" width="28" height="28" viewBox="0 0 28 28"><circle cx="14" cy="14" r="14.100" fill="#0078d4"/><path d="M8.300 13.900L11.900 17.300L19.500 9.900" fill="none" stroke="#fff" stroke-width="2.900" stroke-linecap="round" stroke-linejoin="round"/></svg>
<svg style="left:153px;top:1042.0px;will-change:transform" width="21" height="27" viewBox="0 0 21 27"><path d="M3.200 1.200h10.800c3.100 0 5.600 2.500 5.600 5.600v16.800c0 1.200-1 2.200-2.200 2.200H7.200c-3.100 0-5.600-2.500-5.600-5.600V2.800c0-.9.700-1.600 1.600-1.600z" fill="url(#pf)" stroke="url(#ps)" stroke-width="1.500"/><text transform="translate(4.1 11.45) scale(.8 1)" font-family="Liberation Sans, sans-serif" font-size="6" font-weight="bold" font-style="italic" fill="#d40000" stroke="#d40000" stroke-width=".9" letter-spacing="1.8">PDF</text><rect x="5.300" y="15.100" width="10.300" height="1.600" rx=".6" fill="#8e8e8e"/><rect x="5.300" y="18.400" width="10.300" height="1.600" rx=".6" fill="#646464"/></svg>
<svg style="left:201px;top:1033.5px" width="14" height="14" viewBox="0 0 14 14"><path d="M12.7 .9v6.6M4.500 4.600l4.800 4.400M1.100 12.200h7" fill="none" stroke="#0078d4" stroke-width="1.700" stroke-linecap="round"/></svg>
<div class="g" style="left:212px;top:1046px"><div class="x" style="font-size:22px;"><span style="transform:translateX(0.58px) scaleX(1.024)">claim_form_061.pdf</span></div></div>
<svg style="left:530px;top:1048.9px" width="28" height="10" viewBox="0 0 28 10"><circle cx="5.600" cy="5" r="2.050" fill="#5f5d5b"/><circle cx="13.800" cy="5" r="2.050" fill="#5f5d5b"/><circle cx="22" cy="5" r="2.050" fill="#5f5d5b"/></svg>
<svg style="left:587px;top:1042.5px" width="25" height="23" viewBox="0 0 25 23"><path d="M9.300 2.100H4.800C2.600 2.100 1 3.700 1 5.900v11.800c0 2.200 1.600 3.800 3.800 3.800h12.400c2.200 0 3.800-1.600 3.800-3.800v-1.400" fill="none" stroke="#605e5c" stroke-width="1.700" stroke-linecap="round"/><path d="M15.500 .8l8 7.500-8 7.500v-4.300c-4.500 0-7.500 1.300-10 4.800.5-6 3.800-10.400 10-11.200z" fill="none" stroke="#605e5c" stroke-width="1.700" stroke-linejoin="round"/></svg>
<svg style="left:640px;top:1043.5px" width="22" height="22" viewBox="0 0 22 22"><path d="M11.9 -0.10000000000000053c0.94 3.66 2.24 4.96 5.9 5.9c-3.66 0.94 -4.96 2.24 -5.9 5.9c-0.94 -3.66 -2.24 -4.96 -5.9 -5.9c3.66 -0.94 4.96 -2.24 5.9 -5.9z" fill="#605e5c"/><path d="M17.7 9.600000000000001c0.61 2.36 1.44 3.19 3.8 3.8c-2.36 0.61 -3.19 1.44 -3.8 3.8c-0.61 -2.36 -1.44 -3.19 -3.8 -3.8c2.36 -0.61 3.19 -1.44 3.8 -3.8z" fill="#605e5c"/><path d="M1.200 14.600L5.900 9.900M1.600 20L4.100 17.700M5.500 16L9.800 12.300M7.400 20.800L10.800 17.200" fill="none" stroke="#605e5c" stroke-width="1.400" stroke-linecap="round"/></svg>
<div class="row" style="top:1097.10px;height:5.90px;border-radius:16px 0 0 0"></div>
<div style="position:absolute;left:34px;top:1103px;width:1300px;height:23px;background:#fbfbfb;border-radius:0 0 0 21px"></div>
<svg style="left:43px;top:1109px" width="9" height="11" viewBox="0 0 9 11"><path d="M1 5.500L8 1v9z" fill="#8b8b8b" stroke="#8b8b8b" stroke-width="2" stroke-linejoin="round"/></svg>
<div style="position:absolute;left:61px;top:1108px;width:854px;height:13px;background:#8b8b8b;border-radius:7px"></div>
<div class="toast"></div>
<svg style="left:442.200px;top:1008.500px" width="32" height="32" viewBox="0 0 32 32"><circle cx="16" cy="16" r="15.600" fill="#92c353"/><path d="M9.800 16.300l4.300 4.300 8.300-8.700" fill="none" stroke="#323130" stroke-width="2.300"/></svg>
<div class="g" style="left:502px;top:1012px"><div class="x" style="font-size:21.3px;color:#f6f5f4;"><span style="transform:translateX(0.75px) scaleX(0.95);letter-spacing:-0.054px">Your</span> <span style="transform:translateX(-0.55px) scaleX(0.977);letter-spacing:0.027px">files</span> <span style="transform:translateX(-1.51px) scaleX(0.943);letter-spacing:0.118px">are</span> <span style="transform:translateX(-2.43px) scaleX(1.017);letter-spacing:-0.028px">being</span> <span style="transform:translateX(-1.51px) scaleX(0.968)">processed.</span> <span style="transform:translateX(-3.67px) scaleX(0.895);letter-spacing:-0.049px">This</span> <span style="transform:translateX(-7.27px) scaleX(0.951);letter-spacing:-0.071px">may</span> <span style="transform:translateX(-6.63px) scaleX(0.969);letter-spacing:0.101px">take</span></div></div>
<div class="g" style="left:502px;top:1040px"><div class="x" style="font-size:21.3px;color:#f6f5f4;"><span style="transform:translateX(0.45px) scaleX(0.94);letter-spacing:0.039px">several</span> <span style="transform:translateX(-3.74px) scaleX(0.997);letter-spacing:0.02px">hours.</span> <span style="transform:translateX(-4.2px) scaleX(1.009)">AI-generated</span> <span style="transform:translateX(-3.56px) scaleX(1.029)">content</span> <span style="transform:translateX(-0.37px) scaleX(0.939);letter-spacing:-0.167px">may</span> <span style="transform:translateX(-0.8px) scaleX(1.014);letter-spacing:0.147px">be</span></div></div>
<div class="g" style="left:502px;top:1068px"><div class="x" style="font-size:21.3px;color:#f6f5f4;"><span style="transform:translateX(0.01px) scaleX(1.004);letter-spacing:0.028px">incorrect.</span> <span style="transform:translateX(-0.36px) scaleX(0.94);letter-spacing:-0.06px">Check</span> <span style="transform:translateX(-3.08px) scaleX(1.036);letter-spacing:-0.032px">column</span> <span style="transform:translateX(-0.98px) scaleX(0.979);letter-spacing:-0.025px">results.</span></div></div>
<svg style="left:1018px;top:1016.500px" width="16.500" height="16.500" viewBox="0 0 16.500 16.500"><path d="M.7.700l15.100 15.100M15.800.700L.7 15.800" stroke="#fff" stroke-width="1.800" fill="none"/></svg>
</body>
</html>
